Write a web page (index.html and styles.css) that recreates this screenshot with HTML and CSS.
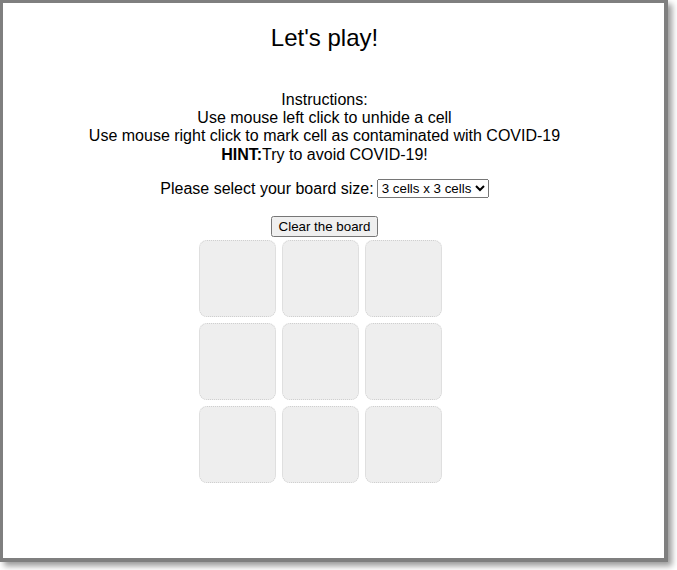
FILE: index.html
```html
<!DOCTYPE html>
<html>
<head>
<meta charset="utf-8">
<title>Let's play!</title>
<link rel="stylesheet" href="styles.css">
</head>
<body>
<div class="frame">
  <main class="page">
    <h2 class="title">Let's play!</h2>
    <div class="instructions">
      <div>Instructions:</div>
      <div>Use mouse left click to unhide a cell</div>
      <div>Use mouse right click to mark cell as contaminated with COVID-19</div>
      <div><b>HINT:</b>Try to avoid COVID-19!</div>
    </div>
    <div class="size-row">
      <label for="size">Please select your board size:</label>
      <select id="size" class="size-select">
        <option>3 cells x 3 cells</option>
        <option>4 cells x 4 cells</option>
        <option>5 cells x 5 cells</option>
      </select>
    </div>
    <button class="clear-btn" type="button">Clear the board</button>
    <div class="board">
      <div class="cell"></div><div class="cell"></div><div class="cell"></div>
      <div class="cell"></div><div class="cell"></div><div class="cell"></div>
      <div class="cell"></div><div class="cell"></div><div class="cell"></div>
    </div>
  </main>
</div>
</body>
</html>
```

FILE: styles.css
```css
html, body {
  margin: 0;
  padding: 0;
  background: #ffffff;
}

body {
  font-family: "Liberation Sans", Arial, sans-serif;
  color: #000;
  min-height: 570px;
}

.frame {
  box-sizing: border-box;
  width: 668px;
  height: 562px;
  border-style: solid;
  border-color: #7f7f7f;
  border-width: 3px 4px 4px 3px;
  background: #fff;
  box-shadow: 4px 4px 6px rgba(0, 0, 0, 0.4);
}

.page {
  display: flex;
  flex-direction: column;
  align-items: center;
  text-align: center;
  padding-right: 18px;
  font-size: 16px;
}

.title {
  font-size: 24px;
  font-weight: normal;
  margin: 21px 0 0;
  line-height: 27.6px;
}

.instructions {
  margin-top: 39px;
  line-height: 18.4px;
}

.size-row {
  margin-top: 14px;
  display: flex;
  align-items: center;
  gap: 3px;
  height: 21px;
}

.size-select {
  font-family: "Liberation Sans", Arial, sans-serif;
  font-size: 13.33px;
}

.clear-btn {
  margin-top: 17px;
  font-family: "Liberation Sans", Arial, sans-serif;
  font-size: 13.33px;
  padding: 1px 6px;
}

.board {
  margin-top: 0px;
  margin-right: 8px;
  display: grid;
  grid-template-columns: repeat(3, 77px);
  grid-auto-rows: 77px;
  gap: 6px;
  padding-top: 3px;
}

.cell {
  box-sizing: border-box;
  background: #eeeeee;
  border: 1px dotted #cfcfcf;
  border-radius: 8px;
}
```
